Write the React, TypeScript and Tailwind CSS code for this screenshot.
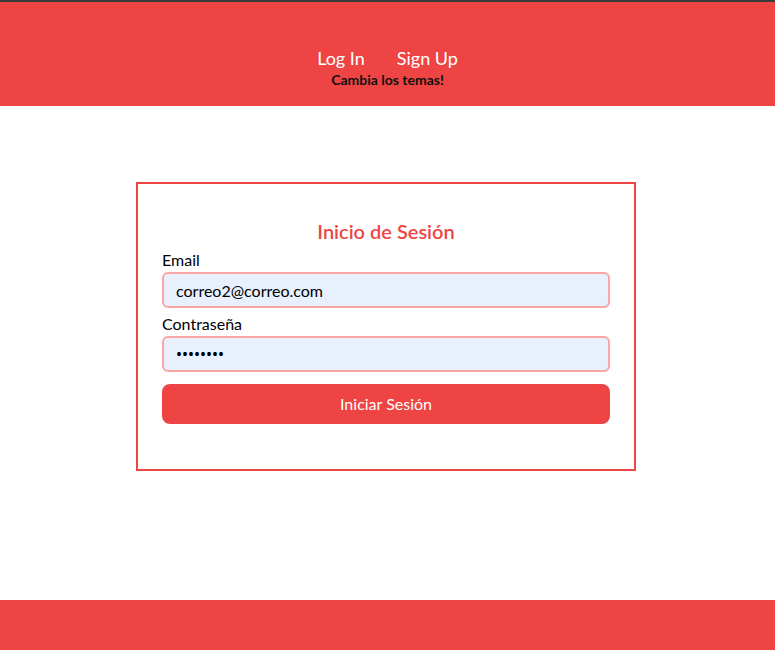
export default function App() {
  return (
    <div
      className="flex min-h-[650px] flex-col bg-white"
      style={{ fontFamily: 'Lato, "Noto Sans", sans-serif' }}
    >
      <header className="border-t-2 border-[#3a3a3a] bg-[#ef4444] pt-[44px] pb-[16px]">
        <nav className="flex justify-center gap-8 text-lg leading-6 text-white">
          <a href="#">Log In</a>
          <a href="#">Sign Up</a>
        </nav>
        <p className="text-center text-sm leading-5 font-bold text-[#111]">
          Cambia los temas!
        </p>
      </header>

      <main className="flex flex-1 justify-center pt-[76px] pr-[3px]">
        <form className="h-fit w-[500px] border-2 border-[#ef4444] px-6 pt-[33px] pb-[45px]">
          <h2 className="mb-[3px] text-center text-xl leading-7 font-semibold text-[#ef4444]">
            Inicio de Sesión
          </h2>
          <label className="block text-base leading-6 text-black">Email</label>
          <input
            type="email"
            readOnly
            defaultValue="correo2@correo.com"
            className="block h-9 w-full rounded-md border-2 border-[#fca5a5] bg-[#e8f0fe] px-3 text-base text-black outline-none"
          />
          <label className="mt-1 block text-base leading-6 text-black">Contraseña</label>
          <input
            type="password"
            readOnly
            defaultValue="12345678"
            className="block h-9 w-full rounded-md border-2 border-[#fca5a5] bg-[#e8f0fe] px-3 font-['Noto_Sans',sans-serif] text-base text-black outline-none"
          />
          <button
            type="button"
            className="mt-3 h-10 w-full rounded-lg bg-[#ef4444] text-base text-white"
          >
            Iniciar Sesión
          </button>
        </form>
      </main>

      <footer className="h-[50px] bg-[#ef4444]" />
    </div>
  );
}
